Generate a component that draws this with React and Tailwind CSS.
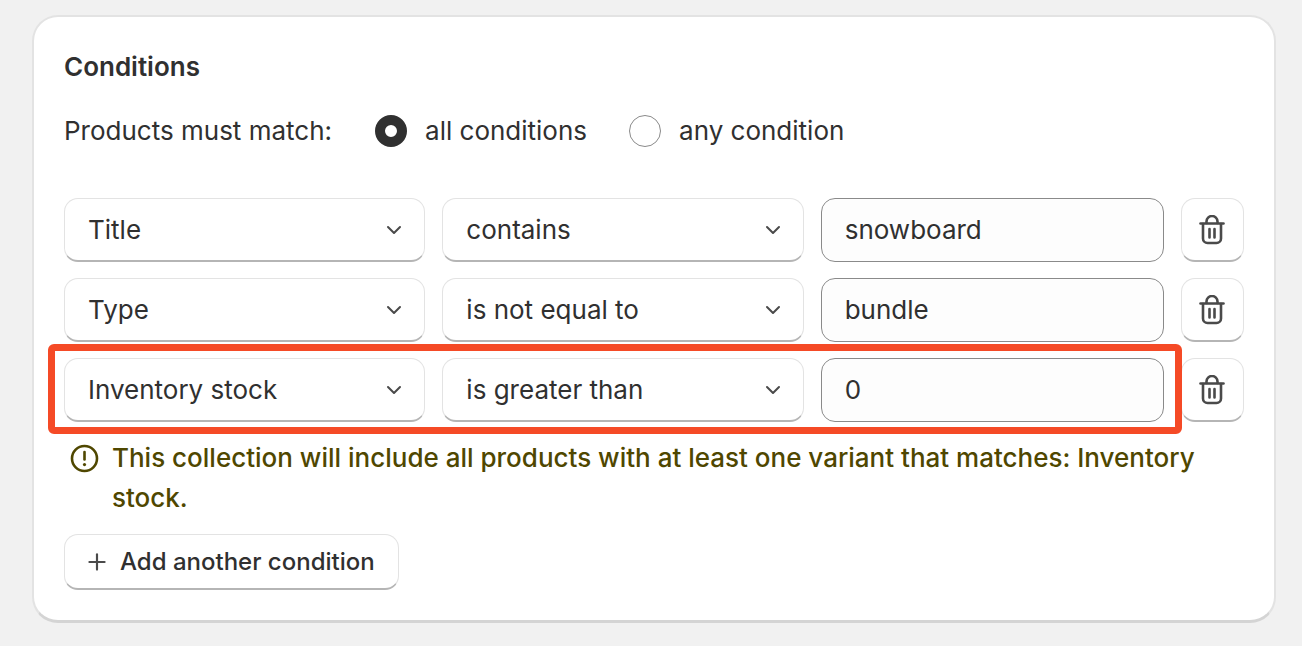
import { ChevronDown, Plus } from "lucide-react";

const rows = [
  { field: "Title", op: "contains", value: "snowboard" },
  { field: "Type", op: "is not equal to", value: "bundle" },
  { field: "Inventory stock", op: "is greater than", value: "0", flagged: true },
];

function TrashIcon() {
  return (
    <svg width="26" height="30" viewBox="0 0 26 30" fill="none" stroke="#4a4a4a" strokeWidth="2.6" strokeLinecap="round" strokeLinejoin="round">
      <path d="M1.5 8.5h23" />
      <path d="M7.5 8V6.5a5.5 5.5 0 0 1 11 0V8" />
      <path d="M4 9v14.5a4.5 4.5 0 0 0 4.5 4.5h9a4.5 4.5 0 0 0 4.5-4.5V9" />
      <path d="M10.5 14v8.5M15.5 14v8.5" />
    </svg>
  );
}

function Select({ label }) {
  return (
    <div className="flex h-[64px] flex-1 items-center justify-between rounded-[14px] border border-[#e3e3e3] border-b-2 border-b-[#b5b5b5] bg-white pl-[23px] pr-[18px]">
      <span>{label}</span>
      <ChevronDown size={24} strokeWidth={2} color="#4a4a4a" />
    </div>
  );
}

function ConditionRow({ row }) {
  return (
    <div className="relative flex gap-[17px]">
      <Select label={row.field} />
      <Select label={row.op} />
      <div className="flex h-[64px] flex-1 items-center rounded-[14px] border border-[#8a8a8a] bg-[#fdfdfd] pl-[23px]">
        {row.value}
      </div>
      <div className="flex h-[64px] w-[63px] shrink-0 items-center justify-center rounded-[14px] border border-[#e3e3e3] border-b-2 border-b-[#b5b5b5] bg-white">
        <TrashIcon />
      </div>
      {row.flagged && (
        <div className="absolute left-[-16px] top-[-14px] h-[90px] w-[1134px] rounded-[6px] border-[7px] border-[#f54a26]" />
      )}
    </div>
  );
}

export default function App() {
  return (
    <div className="min-h-[646px] bg-[#f1f1f1] pl-[32px] pr-[26px] pt-[15px] font-['Inter',sans-serif] text-[26px] leading-[40px] text-[#303030]">
      <div className="h-[608px] rounded-[26px] border-2 border-[#e3e3e3] border-b-[3px] border-b-[#d4d4d4] bg-white px-[30px] pt-[30px]">
        <h2 className="text-[26px] font-semibold leading-[40px]">Conditions</h2>

        <div className="mt-[24px] flex items-center">
          <span>Products must match:</span>
          <span className="ml-[43px] h-[32px] w-[32px] rounded-full border-[10px] border-[#303030] bg-white" />
          <span className="ml-[18px]">all conditions</span>
          <span className="ml-[42px] h-[32px] w-[32px] rounded-full border border-[#8a8a8a] bg-white" />
          <span className="ml-[18px]">any condition</span>
        </div>

        <div className="mt-[47px] flex flex-col gap-[16px]">
          {rows.map((row) => (
            <ConditionRow key={row.field} row={row} />
          ))}
        </div>

        <div className="mt-[16px] flex gap-[13px] pl-[6px] text-[#4f4700]">
          <svg className="mt-[6px] shrink-0" width="29" height="29" viewBox="0 0 29 29" fill="none" stroke="#4f4700" strokeWidth="2.6" strokeLinecap="round">
            <circle cx="14.5" cy="14.5" r="12.5" />
            <path d="M14.5 8v7.5" />
            <path d="M14.5 20.5v.1" strokeWidth="3.2" />
          </svg>
          <p className="font-medium">
            This collection will include all products with at least one variant that matches: Inventory stock.
          </p>
        </div>

        <div className="mt-[16px] inline-flex h-[56px] items-center gap-[10px] rounded-[14px] border border-[#e3e3e3] border-b-2 border-b-[#b5b5b5] bg-white pl-[19px] pr-[23px] text-[24px] font-medium">
          <Plus size={26} strokeWidth={2} color="#4a4a4a" />
          Add another condition
        </div>
      </div>
    </div>
  );
}
